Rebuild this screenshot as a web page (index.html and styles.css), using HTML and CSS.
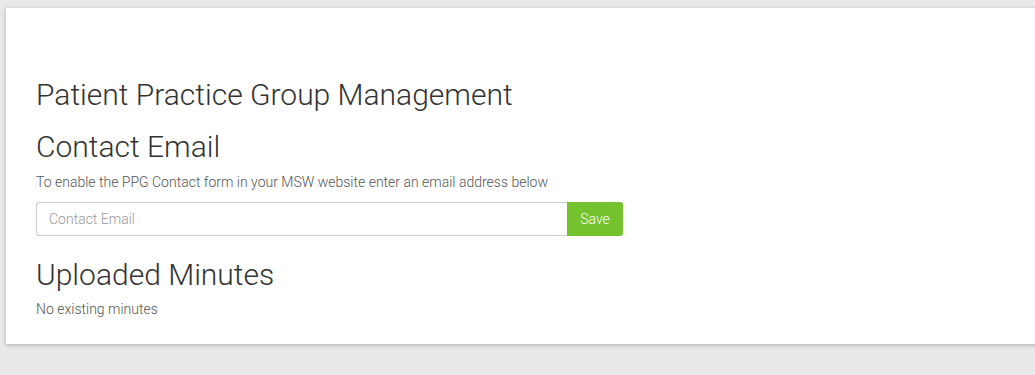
FILE: index.html
```html
<!DOCTYPE html>
<html>
<head>
<meta charset="utf-8">
<link rel="stylesheet" href="styles.css">
</head>
<body>
<div class="card">
  <h1 class="title">Patient Practice Group Management</h1>
  <h2 class="section first">Contact Email</h2>
  <p class="help">To enable the PPG Contact form in your MSW website enter an email address below</p>
  <div class="input-group">
    <input class="field" type="text" placeholder="Contact Email">
    <button class="save">Save</button>
  </div>
  <h2 class="section second">Uploaded Minutes</h2>
  <p class="note">No existing minutes</p>
</div>
</body>
</html>
```

FILE: styles.css
```css
html, body {
  margin: 0;
  padding: 0;
}
body {
  background: #e8e8e8;
  font-family: Roboto, "Liberation Sans", sans-serif;
  color: #333;
  padding: 8px 0 0 6px;
  height: 375px;
  box-sizing: border-box;
  overflow: hidden;
}
.card {
  background: #fff;
  width: 1040px;
  height: 336px;
  box-sizing: border-box;
  padding: 69px 30px 0 30px;
  box-shadow: 0 1px 4px rgba(0,0,0,0.25);
}
.title {
  margin: 0;
  font-weight: 300;
  font-size: 30px;
  line-height: 36px;
  color: #333;
}
.section {
  margin: 0;
  font-weight: 300;
  font-size: 30px;
  line-height: 36px;
  color: #333;
}
.section.first {
  margin-top: 16px;
}
.section.second {
  margin-top: 21px;
}
.help {
  margin: 7px 0 0 0;
  font-size: 14px;
  font-weight: 300;
  line-height: 20px;
  color: #555;
}
.input-group {
  display: flex;
  width: 587px;
  margin-top: 10px;
  height: 34px;
}
.field {
  flex: 1;
  border: 1px solid #ccc;
  border-right: none;
  border-radius: 3px 0 0 3px;
  padding: 0 12px;
  font-family: Roboto, "Liberation Sans", sans-serif;
  font-size: 14px;
  color: #555;
  outline: none;
}
.field::placeholder {
  color: #999;
  font-weight: 300;
}
.save {
  width: 56px;
  background: #74c22e;
  border: none;
  border-radius: 0 3px 3px 0;
  color: #fff;
  font-family: Roboto, "Liberation Sans", sans-serif;
  font-size: 14px;
  font-weight: 300;
  padding: 0;
}
.note {
  margin: 6px 0 0 0;
  font-size: 14px;
  font-weight: 300;
  line-height: 20px;
  color: #555;
}
```
